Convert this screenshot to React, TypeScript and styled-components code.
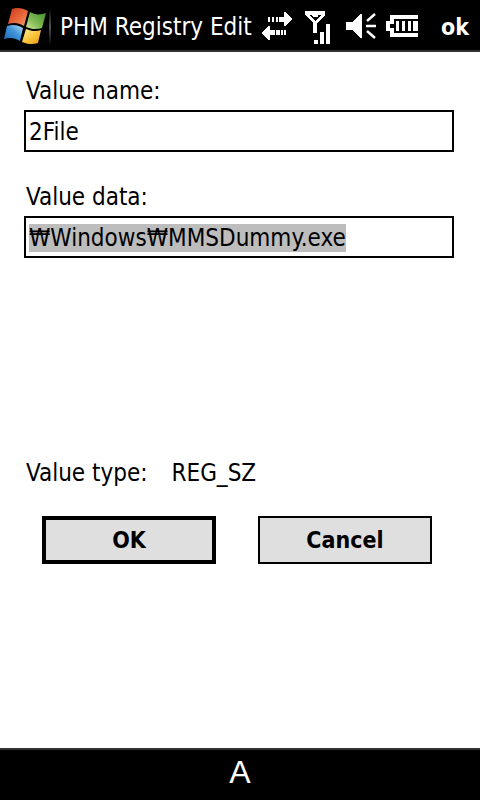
import React, { useEffect, useRef } from "react";
import styled, { createGlobalStyle } from "styled-components";

const GlobalStyle = createGlobalStyle`
  * { box-sizing: border-box; }
  body {
    margin: 0;
    background: #fff;
    color: #000;
    font: 24px/30px "DejaVu Sans Condensed", "DejaVu Sans", sans-serif;
  }
`;

const Screen = styled.div`
  display: flex;
  flex-direction: column;
  min-height: 100vh;
`;

const TitleBar = styled.header`
  display: flex;
  align-items: center;
  height: 52px;
  padding: 4px 11px 0 2px;
  background: #000;
  border-bottom: 2px solid #333;
  color: #fff;
`;

const StartButton = styled.button`
  display: flex;
  padding: 0;
  border: 0;
  background: none;
`;

const Divider = styled.span`
  width: 2px;
  height: 38px;
  margin: 0 9px 0 2px;
  background: linear-gradient(#000, #555, #000);
`;

const Title = styled.h1`
  flex: 1;
  min-width: 0;
  margin: 0;
  font-size: 24px;
  font-weight: normal;
  white-space: nowrap;
  overflow: hidden;
`;

const StatusIcons = styled.div`
  display: flex;
  flex: none;
`;

const OkLink = styled.button`
  margin-left: 21px;
  padding: 0;
  border: 0;
  background: none;
  color: #fff;
  font: inherit;
  font-size: 23px;
  font-weight: bold;
`;

const Form = styled.form`
  flex: 1;
  padding: 24px 26px 24px 24px;
`;

const Field = styled.div`
  display: flex;
  flex-direction: column;
  gap: 4px;
  margin-bottom: 30px;
`;

const Label = styled.label`
  padding-left: 2px;
`;

const TextBox = styled.input`
  width: 100%;
  height: 42px;
  padding: 1px 4px 0 3px;
  border: 2px solid #000;
  border-radius: 0;
  outline: none;
  background: #fff;
  color: #000;
  font: inherit;
  &::selection {
    background: #bdbdbd;
    color: #000;
  }
`;

const TypeRow = styled.div`
  display: flex;
  gap: 24px;
  margin-top: 200px;
  padding-left: 2px;
`;

const Actions = styled.div`
  display: grid;
  grid-template-columns: 1fr 1fr;
  gap: 42px;
  margin-top: 28px;
  padding: 0 22px 0 18px;
`;

const ActionButton = styled.button<{ $primary?: boolean }>`
  height: 48px;
  padding: 0;
  border: ${(p) => (p.$primary ? 4 : 2)}px solid #000;
  border-radius: 0;
  background: #dfdfdf;
  color: #000;
  font: inherit;
  font-size: 23px;
  font-weight: bold;
`;

const MenuBar = styled.footer`
  display: flex;
  align-items: center;
  justify-content: center;
  height: 52px;
  padding-bottom: 6px;
  border-top: 2px solid #333;
  background: #000;
`;

const InputMode = styled.button`
  padding: 0;
  border: 0;
  background: none;
  color: #fff;
  font: 32px/40px "Liberation Sans", sans-serif;
`;

const WindowsFlag = () => (
  <svg width="45" height="44" viewBox="2 5 45 44" aria-hidden="true">
    <defs>
      <linearGradient id="red" x1="0" y1="0" x2="1" y2="1">
        <stop offset="0" stopColor="#c8371c" /><stop offset=".55" stopColor="#e8683a" /><stop offset="1" stopColor="#f3a36a" />
      </linearGradient>
      <linearGradient id="green" x1="1" y1="0" x2="0" y2="1">
        <stop offset="0" stopColor="#3f8f2c" /><stop offset=".6" stopColor="#85bd55" /><stop offset="1" stopColor="#d3e8a2" />
      </linearGradient>
      <linearGradient id="blue" x1="0" y1="1" x2="1" y2="0">
        <stop offset="0" stopColor="#1c61b4" /><stop offset=".55" stopColor="#3f94d8" /><stop offset="1" stopColor="#b9def2" />
      </linearGradient>
      <linearGradient id="yellow" x1="1" y1="1" x2="0" y2="0">
        <stop offset="0" stopColor="#e39a17" /><stop offset=".5" stopColor="#fbc63c" /><stop offset="1" stopColor="#fff0a0" />
      </linearGradient>
    </defs>
    <path fill="url(#red)" d="M12 9C17 7 23 8 28 11L24 26C19 23 14 22 8 24Z" />
    <path fill="url(#green)" d="M30 12C35 15 40 15 46 13L42 28C36 30 31 29 26 27Z" />
    <path fill="url(#blue)" d="M7 26C13 24 18 25 23 28L20 41C15 38 10 37 4 39Z" />
    <path fill="url(#yellow)" d="M26 29C31 31 36 32 41 30L38 43C32 45 27 44 22 42Z" />
  </svg>
);

const Status = () => (
  <svg width="159" height="36" viewBox="261 9 159 36" fill="#fff" aria-label="Connected, signal, volume, battery full" role="img">
    <g shapeRendering="crispEdges">
      <path d="M268 17h2v5h-2zM272 17h2v5h-2zM276 17h2v5h-2zM279 17h6v5h-6z" />
      <path d="M275 30h-6v5h6zM276 30h4v5h-4zM281 30h2v5h-2zM284 30h2v5h-2z" />
      <path d="M284 12h2l6 7-6 7h-2zM270 26h-2l-6 7 6 7h2z" />
      <path fillRule="evenodd" d="M305 11H325V15L317 23V33H313V23L305 15ZM309 15L315 21L321 15Z" />
      <path d="M312 15h6v1l-1 1h-4l-1-1zM314 40h4v4h-4zM320 32h4v12h-4zM326 24h4v20h-4z" />
      <path d="M346 22h6l8-8h2v24h-2l-8-8h-6z" />
      <path d="M390 15h28v4h-24v5h-4v4h4v5h24v4h-28v-6h-4V21h4zM396 21h3v10h-3zM402 21h3v10h-3zM408 21h3v10h-3zM413 21h5v10h-5z" />
    </g>
    <path d="M367 21l8-7M366 26h10M367 31l8 7" fill="none" stroke="#fff" strokeWidth="2.4" />
  </svg>
);

export default function App() {
  const dataRef = useRef<HTMLInputElement>(null);

  useEffect(() => {
    dataRef.current?.focus();
    dataRef.current?.select();
  }, []);

  return (
    <>
      <GlobalStyle />
      <Screen>
        <TitleBar>
          <StartButton type="button" aria-label="Start"><WindowsFlag /></StartButton>
          <Divider />
          <Title>PHM Registry Edit</Title>
          <StatusIcons><Status /></StatusIcons>
          <OkLink type="submit" form="value-form">ok</OkLink>
        </TitleBar>
        <Form id="value-form" onSubmit={(e) => e.preventDefault()}>
          <Field>
            <Label htmlFor="value-name">Value name:</Label>
            <TextBox id="value-name" defaultValue="2File" />
          </Field>
          <Field>
            <Label htmlFor="value-data">Value data:</Label>
            <TextBox id="value-data" ref={dataRef} defaultValue="₩Windows₩MMSDummy.exe" spellCheck={false} />
          </Field>
          <TypeRow>
            <span>Value type:</span>
            <span>REG_SZ</span>
          </TypeRow>
          <Actions>
            <ActionButton $primary type="submit">OK</ActionButton>
            <ActionButton type="button">Cancel</ActionButton>
          </Actions>
        </Form>
        <MenuBar>
          <InputMode type="button">A</InputMode>
        </MenuBar>
      </Screen>
    </>
  );
}
